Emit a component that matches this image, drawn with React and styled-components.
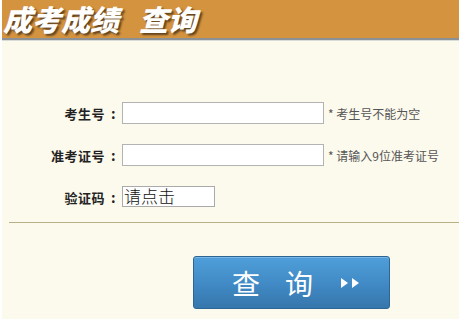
import React from 'react';
import styled, {createGlobalStyle} from 'styled-components';

const Global = createGlobalStyle`
    html, body {
        margin: 0;
        padding: 0;
        background: #ffffff;
    }
    body {
        font-family: "Noto Sans CJK SC", "Liberation Sans", sans-serif;
    }
`;

function App() {
    return (
        <>
            <Global />
            <Page>
                <Header>
                    <Title>
                        <Word>成考成绩</Word>
                        <Word>查询</Word>
                    </Title>
                </Header>
                <Form>
                    <Row>
                        <Label>考生号<Colon>:</Colon></Label>
                        <Input />
                        <Hint>* 考生号不能为空</Hint>
                    </Row>
                    <Row>
                        <Label>准考证号<Colon>:</Colon></Label>
                        <Input />
                        <Hint>* 请输入9位准考证号</Hint>
                    </Row>
                    <Row>
                        <Label>验证码<Colon>:</Colon></Label>
                        <Captcha>请点击</Captcha>
                    </Row>
                </Form>
                <Divider />
                <ButtonRow>
                    <SearchButton>
                        <span>查</span>
                        <span>询</span>
                        <Arrows viewBox="0 0 22 12">
                            <path d="M1 1 L8 6 L1 11 Z" fill="#fff" />
                            <path d="M12 1 L19 6 L12 11 Z" fill="#fff" />
                        </Arrows>
                    </SearchButton>
                </ButtonRow>
            </Page>
        </>
    )
}

const Page = styled.div`
    margin-left: 2px;
    width: 457px;
    height: 319px;
    background: #fcf9ed;
    overflow: hidden;
`;

const Header = styled.div`
    height: 38px;
    background: #d4943f;
    border-bottom: 2px solid #8c9196;
    box-shadow: 0 1px 0 #d9ddd9;
    display: flex;
    align-items: center;
`;

const Title = styled.div`
    margin-left: 1px;
    padding-bottom: 2px;
    display: flex;
    align-items: center;
    gap: 14px;
    font-size: 29px;
    font-weight: 900;
    font-style: italic;
    line-height: 34px;
    color: #ffffff;
    text-shadow: 2px 2px 2px rgba(60, 40, 20, 0.75);
`;

const Word = styled.span`
    padding-right: 6px;
`;

const Form = styled.div`
    padding-top: 62px;
    display: flex;
    flex-direction: column;
    gap: 20px;
`;

const Row = styled.div`
    display: flex;
    align-items: center;
    height: 22px;
`;

const Label = styled.div`
    width: 120px;
    display: flex;
    justify-content: flex-end;
    align-items: center;
    font-size: 13px;
    font-weight: bold;
    color: #222;
    letter-spacing: 0.5px;
`;

const Colon = styled.span`
    width: 17px;
    text-align: center;
    font-size: 14px;
`;

const Input = styled.div`
    box-sizing: border-box;
    width: 202px;
    height: 22px;
    background: #fff;
    border: 1px solid #b3b3b3;
`;

const Hint = styled.span`
    margin-left: 4px;
    font-size: 12px;
    color: #555;
`;

const Captcha = styled.div`
    box-sizing: border-box;
    width: 93px;
    height: 21px;
    background: #fff;
    border: 1px solid #aaa;
    font-size: 17px;
    font-weight: 300;
    line-height: 18px;
    color: #111;
    padding-left: 1px;
    margin-top: -2px;
`;

const Divider = styled.div`
    margin: 14px 0 0 7px;
    height: 1px;
    background: #b9b087;
`;

const ButtonRow = styled.div`
    padding: 33px 0 0 191px;
`;

const SearchButton = styled.button`
    box-sizing: border-box;
    width: 197px;
    height: 53px;
    border: 1px solid #2d6596;
    border-radius: 3px;
    background: linear-gradient(#4f9fda, #4089c4 55%, #3676ac);
    box-shadow: inset 0 1px 0 rgba(255, 255, 255, 0.25);
    display: flex;
    align-items: center;
    padding: 0 0 0 38px;
    gap: 25px;
    color: #fff;
    font-family: "Noto Sans CJK SC", sans-serif;
    font-size: 28px;
    line-height: 1;
    cursor: pointer;
`;

const Arrows = styled.svg`
    width: 22px;
    height: 12px;
    margin-left: 2px;
`;

export default App;
